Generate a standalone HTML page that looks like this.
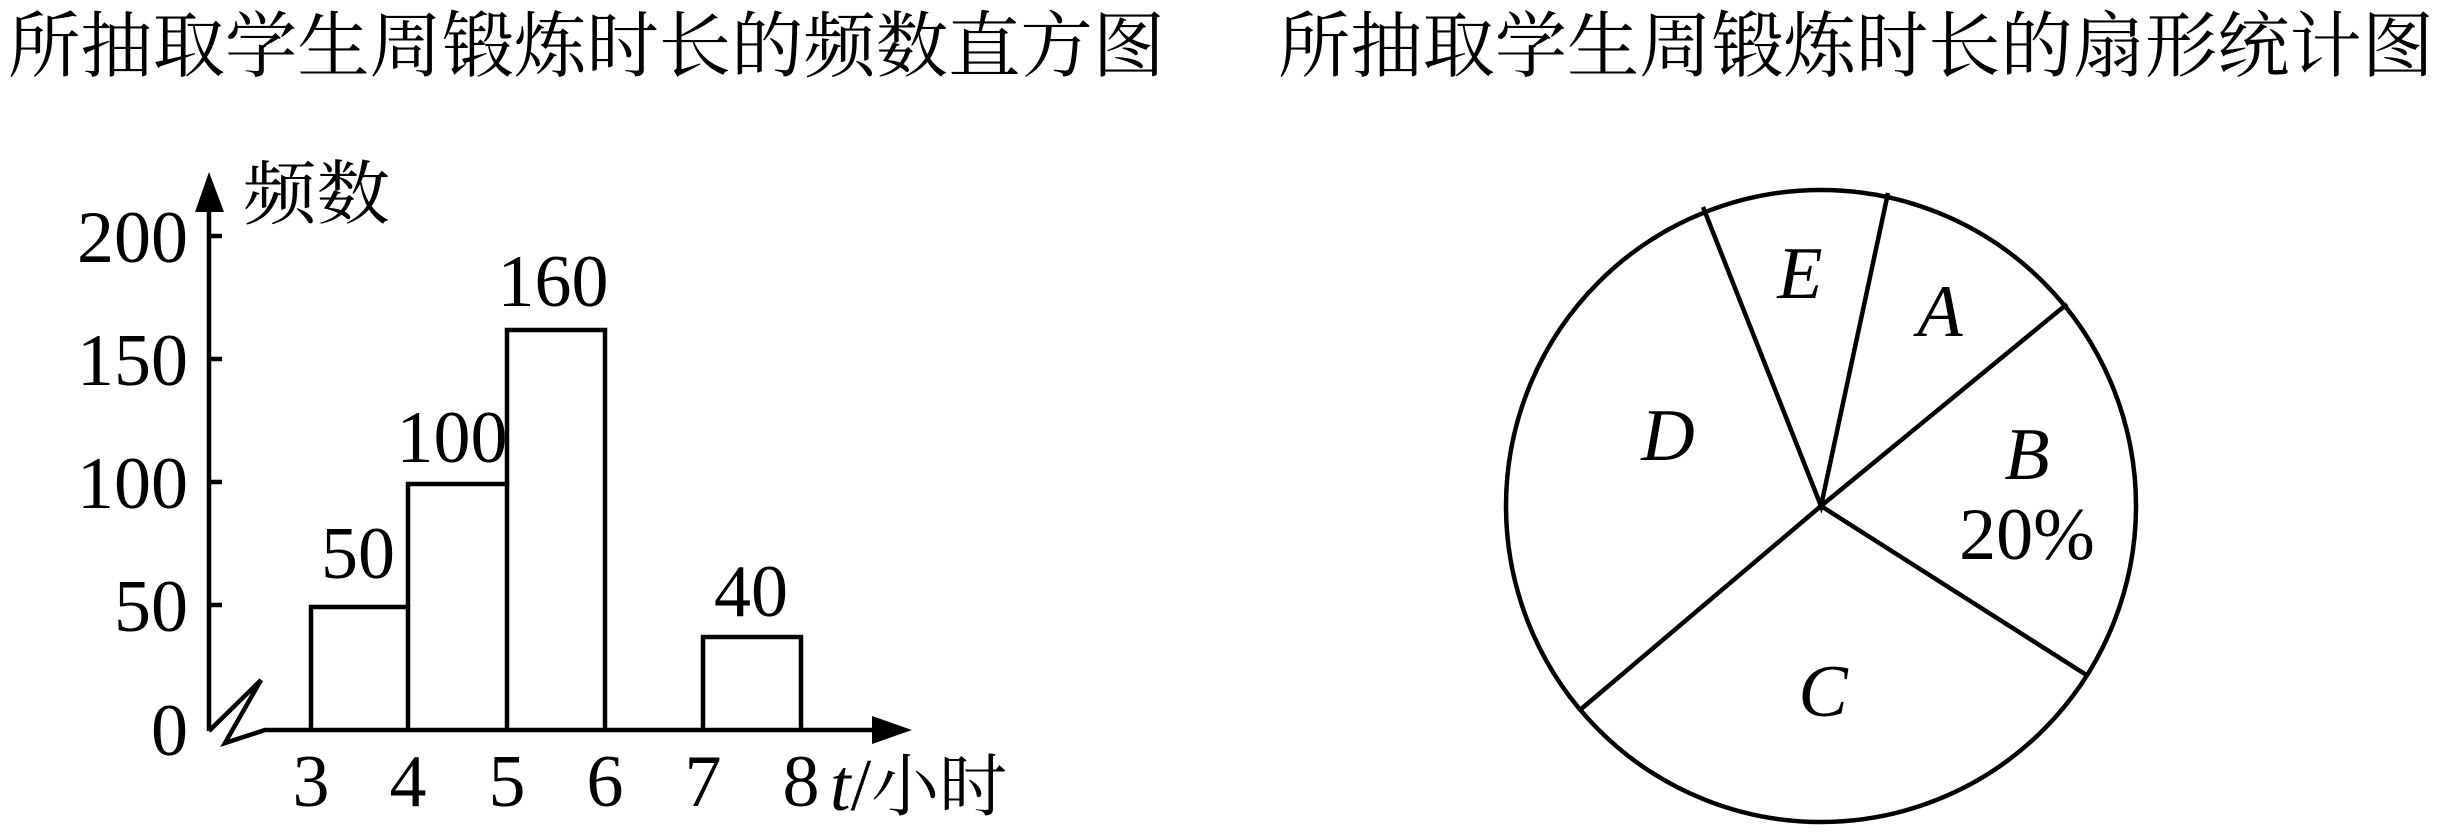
<!DOCTYPE html>
<html><head><meta charset="utf-8"><style>
html,body{margin:0;padding:0;background:#fff;}
svg{display:block;}
text{font-family:"Liberation Serif","Noto Serif CJK SC",serif;fill:#000;}
.cjk{font-family:"Liberation Serif","Noto Serif CJK SC","Noto Sans CJK SC",serif;}
.it{font-style:italic;}
</style></head><body>
<svg width="2443" height="838" viewBox="0 0 2443 838" xmlns="http://www.w3.org/2000/svg">
<text class="cjk" x="8" y="71" font-size="72" textLength="1157" lengthAdjust="spacingAndGlyphs">所抽取学生周锻炼时长的频数直方图</text>
<text class="cjk" x="1278" y="71" font-size="72" textLength="1156" lengthAdjust="spacingAndGlyphs">所抽取学生周锻炼时长的扇形统计图</text>

<g stroke="#000" stroke-width="4.5" fill="none" stroke-linejoin="miter">
<line x1="209" y1="205" x2="209" y2="731"/>
<polyline points="209,731 261,680 225,743 265,730 872,730"/>
<line x1="209" y1="236" x2="222" y2="236"/>
<line x1="209" y1="359" x2="222" y2="359"/>
<line x1="209" y1="482" x2="222" y2="482"/>
<line x1="209" y1="605" x2="222" y2="605"/>
<polyline points="311,730 311,607 408,607 408,730"/>
<polyline points="408,607 408,484 507,484 507,730"/>
<polyline points="507,484 507,330 605,330 605,730"/>
<polyline points="703,730 703,637 801,637 801,730"/>
</g>
<polygon points="209,172 195,212 224,212" fill="#000"/>
<polygon points="912,730 872,716 872,744" fill="#000"/>

<text class="cjk" x="243" y="218" font-size="70" textLength="147" lengthAdjust="spacingAndGlyphs">频数</text>
<g font-size="74" text-anchor="end">
<text x="188" y="262">200</text>
<text x="188" y="385">150</text>
<text x="188" y="508">100</text>
<text x="188" y="631">50</text>
<text x="188" y="755">0</text>
</g>
<g font-size="74" text-anchor="middle">
<text x="358" y="578">50</text>
<text x="452" y="462">100</text>
<text x="553" y="306">160</text>
<text x="751" y="616">40</text>
<text x="311" y="806">3</text>
<text x="408" y="806">4</text>
<text x="507" y="806">5</text>
<text x="605" y="806">6</text>
<text x="703" y="806">7</text>
<text x="801" y="806">8</text>
</g>
<text x="830" y="810" font-size="74"><tspan class="it">t</tspan>/<tspan class="cjk" font-size="68">小时</tspan></text>

<g stroke="#000" stroke-width="4.5" fill="none">
<ellipse cx="1821" cy="506" rx="315" ry="316"/>
<polyline points="1703,207 1821,506 1888,193"/>
<polyline points="2067,304 1821,506 2088,676"/>
<line x1="1821" y1="506" x2="1580" y2="710"/>
</g>
<g font-size="74" text-anchor="middle">
<text class="it" x="1800" y="298">E</text>
<text class="it" x="1940" y="336">A</text>
<text class="it" x="1668" y="460">D</text>
<text class="it" x="2027" y="479">B</text>
<text x="2027" y="559">20%</text>
<text class="it" x="1823" y="716">C</text>
</g>
</svg>
</body></html>
